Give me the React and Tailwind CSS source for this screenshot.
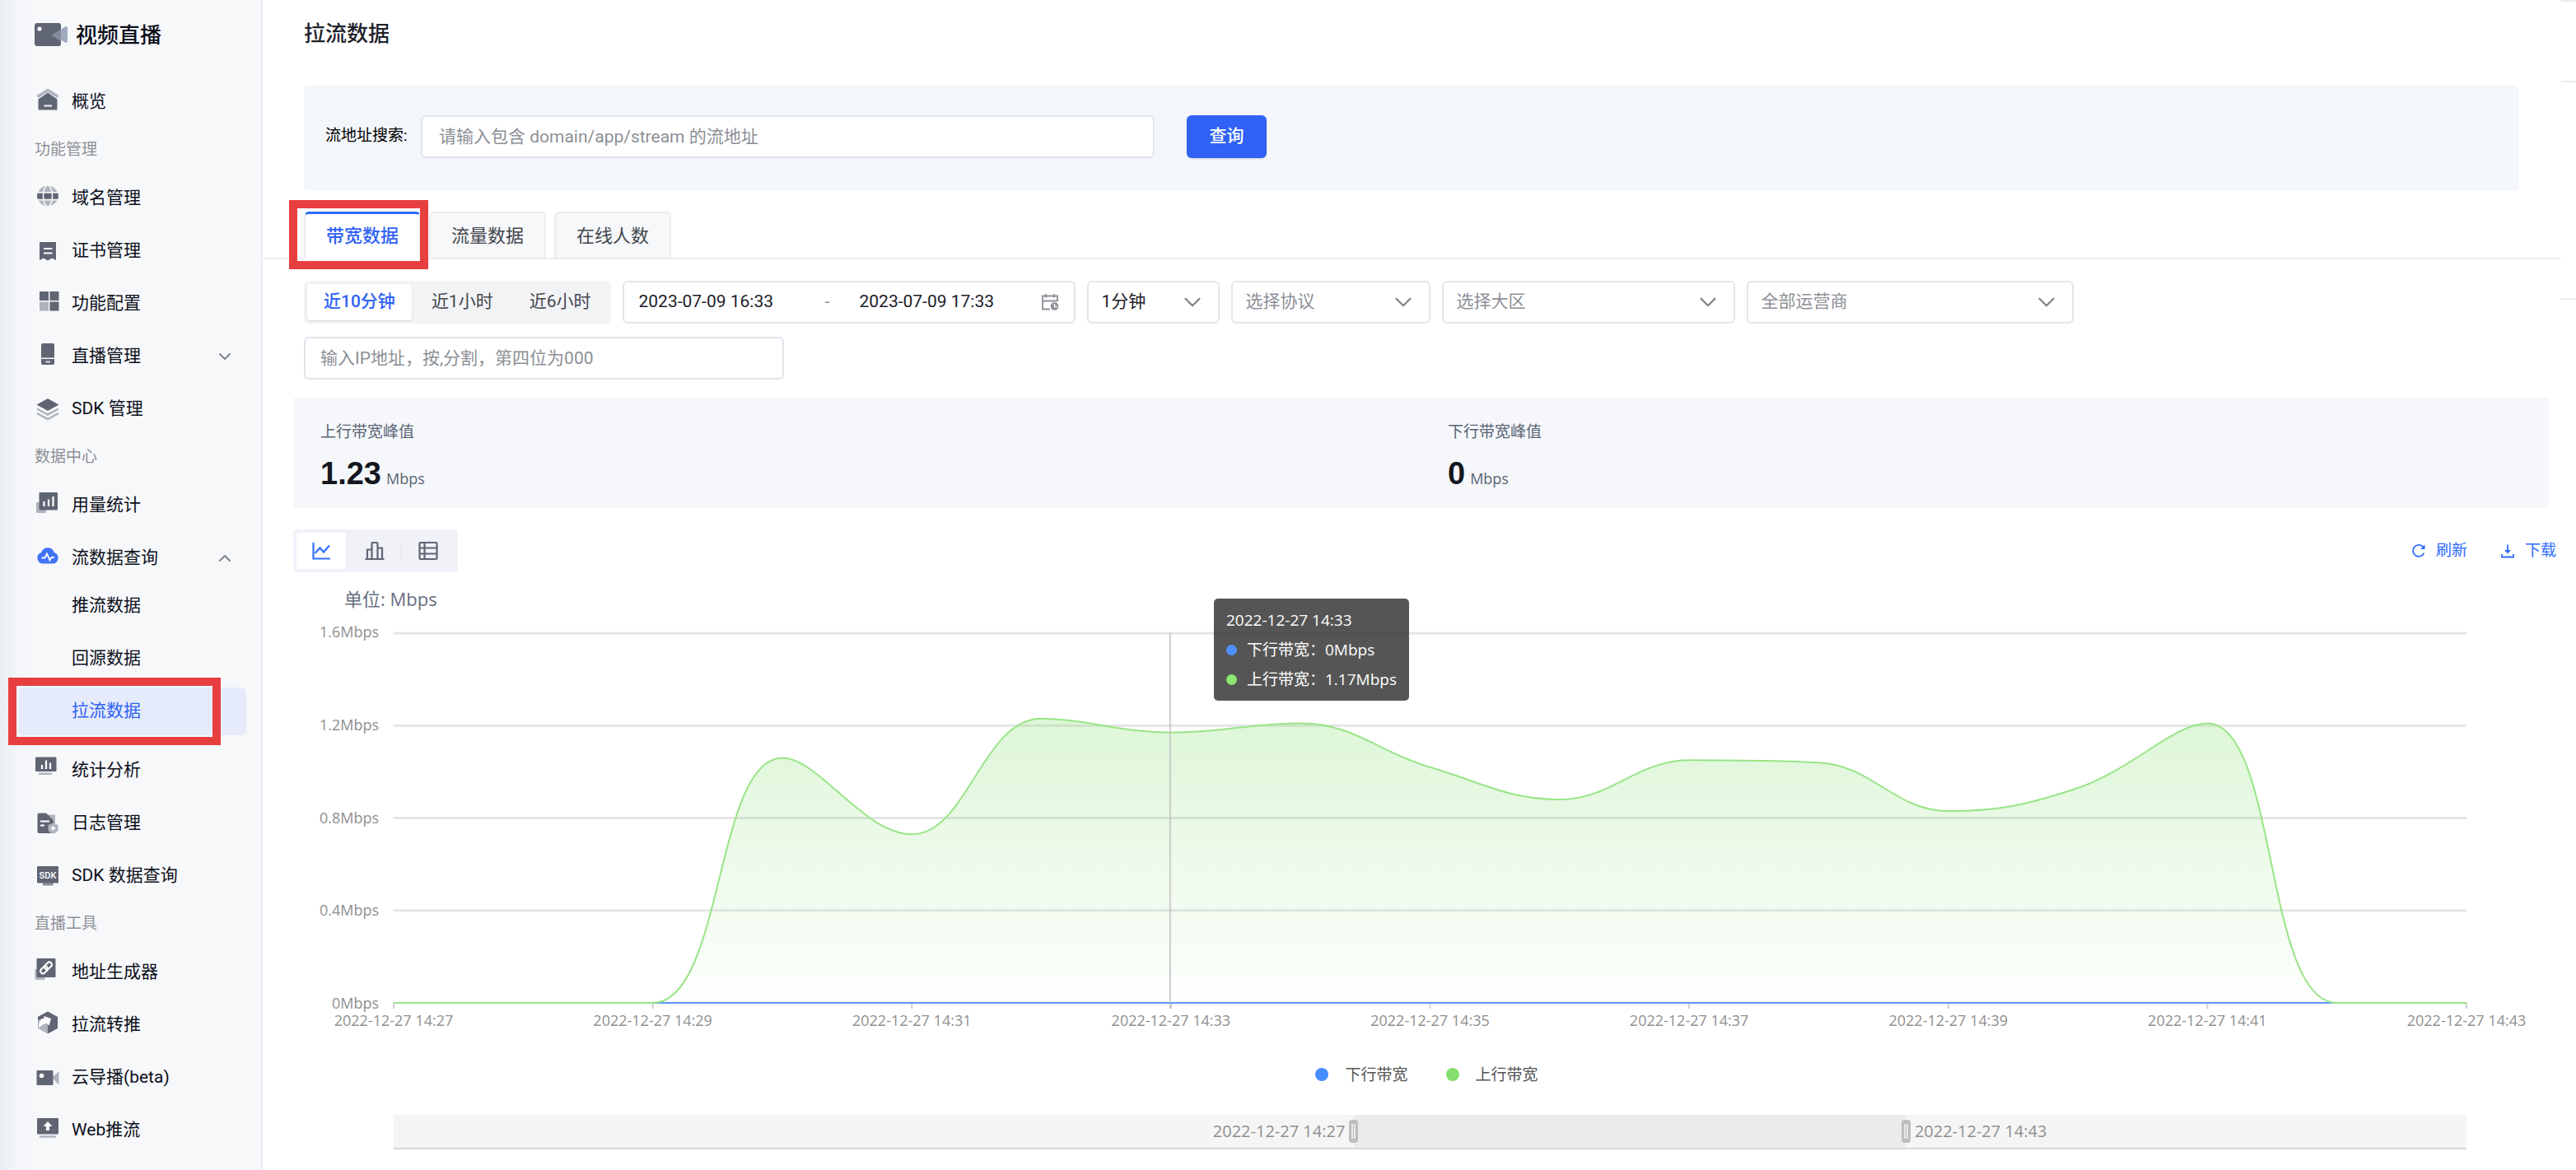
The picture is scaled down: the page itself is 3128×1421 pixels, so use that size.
import React, { useState } from 'react';
import clsx from 'clsx';
import { ChevronDown, ChevronUp } from 'lucide-react';

const DARK = '#5f6573';
const LIGHT = '#aeb3bd';

// --- Sidebar icons ---

const HomeIcon = () => (
  <svg viewBox="0 4 28 28" className="size-7 overflow-visible">
    <path d="M1.500 11.500 14 3.500l12.500 8" fill="none" stroke={LIGHT} strokeWidth="3.500" strokeLinejoin="round" />
    <path d="M14 6.500 25.500 14.500V26.500a1 1 0 0 1-1 1h-21a1 1 0 0 1-1-1V14.500Z" fill={DARK} />
    <path d="M9.500 22.500h9.500" stroke="#f7f8fa" strokeWidth="2" />
  </svg>
);

const GlobeIcon = () => (
  <svg viewBox="0 3 28 28" className="size-7 overflow-visible">
    <circle cx="14" cy="14" r="12.500" fill={LIGHT} />
    <path d="M1.500 10.500h25q.8 3.500 0 7.500h-25q-.8-4 0-7.500Z" fill={DARK} />
    <g fill="none" stroke="#f7f8fa" strokeWidth="1.600">
      <ellipse cx="14" cy="14" rx="5.500" ry="13" />
      <path d="M1 9.800h26M1 18.600h26" />
    </g>
  </svg>
);

const CertIcon = () => (
  <svg viewBox="0 0 28 28" className="size-7 overflow-visible">
    <path d="M4 3h20v22l-5-2.500-5 3-5-3L4 25Z" fill={DARK} />
    <path d="M9 11h10.500M9 16.500h10.500" stroke="#f7f8fa" strokeWidth="2" />
  </svg>
);

const GridIcon = () => (
  <svg viewBox="0 2 28 28" className="size-7 overflow-visible" fill={DARK}>
    <rect x="4" y="1" width="11" height="11" />
    <rect x="16.500" y="1" width="11" height="11" />
    <rect x="4" y="13.500" width="11" height="11" fill={LIGHT} />
    <rect x="16.500" y="13.500" width="11" height="11" />
  </svg>
);

const PhoneIcon = () => (
  <svg viewBox="0 3 28 28" className="size-7 overflow-visible">
    <path d="M8 1h12a2 2 0 0 1 2 2v15.500H6V3a2 2 0 0 1 2-2Z" fill={DARK} />
    <path d="M6 20h16v5a2 2 0 0 1-2 2H8a2 2 0 0 1-2-2Z" fill={DARK} />
    <path d="M11.500 23.500h5.500" stroke="#f7f8fa" strokeWidth="1.600" />
  </svg>
);

const LayersIcon = () => (
  <svg viewBox="0 0 28 28" className="size-7 overflow-visible">
    <path d="m14 1 13.500 7.500L14 16 .5 8.500Z" fill={DARK} />
    <path d="m1 13.500 13 7 13-7M1 19l13 7 13-7" fill="none" stroke={LIGHT} strokeWidth="2.500" />
  </svg>
);

const UsageIcon = () => (
  <svg viewBox="0 4 28 28" className="size-7 overflow-visible">
    <path d="M0 14h12v13H1.500A1.500 1.500 0 0 1 0 25.500Z" fill={LIGHT} />
    <rect x="3.500" y="2" width="22.500" height="21.500" rx="1" fill={DARK} />
    <path d="M9.500 19v-6M15 19V10.500M20.500 19V7" stroke="#fff" strokeWidth="2.200" />
  </svg>
);

const CloudIcon = () => (
  <svg viewBox="0 3 28 28" className="size-7 overflow-visible">
    <path d="M7 23.500a7 7 0 0 1-.8-13.500 8.200 8.200 0 0 1 15.600 0A7 7 0 0 1 21 23.500Z" fill="#4272f5" />
    <path d="M6.500 16.500h4l2.500-5 3.500 8 2-3.500h3.500" fill="none" stroke="#fff" strokeWidth="1.800" />
  </svg>
);

const AnalysisIcon = () => (
  <svg viewBox="0 4 28 28" className="size-7 overflow-visible">
    <rect x="-1" y="1.500" width="25.500" height="17.500" rx="1" fill={DARK} />
    <path d="M7 16v-5M12 16V5.500M17 16V8.500" stroke="#fff" strokeWidth="2.200" />
    <path d="M4 21.800h14" stroke={LIGHT} strokeWidth="2.500" strokeLinecap="round" />
  </svg>
);

const LogIcon = () => (
  <svg viewBox="0 0 28 28" className="size-7 overflow-visible">
    <path d="M14 3.500h9v15h-9Z" fill={LIGHT} />
    <path d="M3.500 1.500h8.500l9 9V26h-17.500a2 2 0 0 1-2-2V3.500a2 2 0 0 1 2-2Z" fill={DARK} />
    <path d="M5 11.500h11M5 16.500h5" stroke="#fff" strokeWidth="1.800" />
    <path d="M20.500 13.500 26.500 16v6q-1.500 3.500-6 4.500-4.500-1-6-4.500v-6Z" fill={LIGHT} />
    <path d="M20.500 17v5.500M17.800 19.800h5.500" stroke="#fff" strokeWidth="1.800" />
  </svg>
);

const SdkIcon = () => (
  <svg viewBox="0 0 28 28" className="size-7 overflow-visible">
    <rect x="8" y="20" width="12.500" height="5.500" fill="#8b909b" />
    <rect x="1" y="2" width="26" height="20.500" rx="1" fill={DARK} />
    <text x="14" y="16.500" textAnchor="middle" fontSize="11" fontWeight="500" fill="#fff" fontFamily="Roboto, sans-serif">SDK</text>
  </svg>
);

const LinkIcon = () => (
  <svg viewBox="0 4 28 28" className="size-7 overflow-visible">
    <path d="M-1.500 14h12v13H0A1.500 1.500 0 0 1-1.500 25.500Z" fill={LIGHT} />
    <rect x="0.500" y="1" width="23" height="23" rx="1" fill={DARK} />
    <g fill="none" stroke="#fff" strokeWidth="2" transform="rotate(-45 12 12.500)">
      <rect x="3.500" y="9.500" width="10" height="6" rx="3" />
      <rect x="10.500" y="9.500" width="10" height="6" rx="3" />
    </g>
  </svg>
);

const RelayIcon = () => (
  <svg viewBox="0 3 28 28" className="size-7 overflow-visible">
    <path d="M14 .5 2 7v14l12 6.500Z" fill={LIGHT} />
    <path d="M14 .5 26 7v14l-12 6.500Z" fill={DARK} />
    <path d="M14 .5 2 7v4l10-3.500 5 0Z" fill={DARK} />
    <path d="M3.500 21q-2-11 6.500-12.500L9 6l9 3-2.500 9-2-3Q6 15.500 3.500 21Z" fill="#fff" />
  </svg>
);

const CameraIcon = () => (
  <svg viewBox="0 0 28 28" className="size-7 overflow-visible">
    <path d="m19 14 8.500-8v16.500Z" fill={LIGHT} />
    <rect x="0.500" y="5" width="20" height="18" rx="1" fill={DARK} />
    <circle cx="6.500" cy="11.500" r="2.800" fill="#fff" />
  </svg>
);

const UploadIcon = () => (
  <svg viewBox="0 2 28 28" className="size-7 overflow-visible">
    <rect x="1" y="1" width="26" height="19.500" rx="1" fill={DARK} />
    <path d="m14 5 5.500 6H16v5h-4v-5H8.500Z" fill="#fff" />
    <path d="M5 23.500h18" stroke={LIGHT} strokeWidth="2.500" strokeLinecap="round" />
  </svg>
);

const LogoIcon = () => (
  <svg viewBox="0 0 40 28" className="h-7 w-10">
    <rect x="0" y="0" width="32" height="28" rx="3" fill={DARK} />
    <path d="M21.500 14.500 37 4.500q3-1.500 3 2v15q0 3.500-3 2L21.500 15.500Z" fill="#a0abbe" />
    <path d="M21.500 14.500 32 7.800v14.400L21.500 15.500Z" fill="#848b9a" />
    <circle cx="6" cy="7" r="2.600" fill="#fff" />
  </svg>
);

// --- Toolbar icons ---

const LineIcon = () => (
  <svg viewBox="0 0 24 24" className="size-6" fill="none" stroke="currentColor" strokeWidth="2.200">
    <path d="M2.500 2v19.500H23" />
    <path d="m4.500 15 6-6.500 4.500 5L22 5.500" />
  </svg>
);

const BarsIcon = () => (
  <svg viewBox="0 0 24 24" className="size-6" fill="none" stroke="currentColor" strokeWidth="2.200">
    <path d="M.5 22h23M3 22V10.500h5.500M15.500 8.500H21V22M8.500 22V3q0-1 1-1h5q1 0 1 1v19" />
  </svg>
);

const TableIcon = () => (
  <svg viewBox="0 0 24 24" className="size-6" fill="none" stroke="currentColor" strokeWidth="2.200">
    <rect x="1.500" y="2" width="21" height="20" rx="1" />
    <path d="M7.500 2v20M1.500 8.500h21M1.500 15.500h21" />
  </svg>
);

const RefreshIcon = () => (
  <svg viewBox="0 0 18 18" className="size-[18px]" fill="none" stroke="currentColor" strokeWidth="1.800">
    <path d="M14.500 4.500A7 7 0 1 0 15.500 11.500" />
    <path d="M16.500 1.500V7H11Z" fill="currentColor" stroke="none" />
  </svg>
);

const DownloadIcon = () => (
  <svg viewBox="0 0 18 18" className="size-[18px]" fill="none" stroke="currentColor" strokeWidth="1.800">
    <path d="M9 1.500v8M2 13v3.500h14V13" />
    <path d="M5 8h8l-4 4.500Z" fill="currentColor" stroke="none" />
  </svg>
);

const CalendarIcon = () => (
  <svg viewBox="0 0 22 22" className="size-[22px] text-[#8c8f96]" fill="none" stroke="currentColor" strokeWidth="1.800">
    <path d="M11 19.500H2V3.500h18V10M2 9.500h18M6 1v4.500M16 1v4.500" />
    <circle cx="16.500" cy="16" r="4.800" fill="currentColor" stroke="none" />
    <path d="M16.500 13v3.500h3" stroke="#fff" strokeWidth="1.400" />
  </svg>
);

// --- Data ---

const MENU = [
  { items: [{ name: '概览', Icon: HomeIcon }] },
  {
    title: '功能管理',
    items: [
      { name: '域名管理', Icon: GlobeIcon },
      { name: '证书管理', Icon: CertIcon },
      { name: '功能配置', Icon: GridIcon },
      { name: '直播管理', Icon: PhoneIcon, Arrow: ChevronDown },
      { name: 'SDK 管理', Icon: LayersIcon },
    ],
  },
  {
    title: '数据中心',
    items: [
      { name: '用量统计', Icon: UsageIcon },
      { name: '流数据查询', Icon: CloudIcon, Arrow: ChevronUp, children: ['推流数据', '回源数据', '拉流数据'] },
      { name: '统计分析', Icon: AnalysisIcon },
      { name: '日志管理', Icon: LogIcon },
      { name: 'SDK 数据查询', Icon: SdkIcon },
    ],
  },
  {
    title: '直播工具',
    items: [
      { name: '地址生成器', Icon: LinkIcon },
      { name: '拉流转推', Icon: RelayIcon },
      { name: '云导播(beta)', Icon: CameraIcon },
      { name: 'Web推流', Icon: UploadIcon },
    ],
  },
];

const TABS = ['带宽数据', '流量数据', '在线人数'];
const RANGES = ['近10分钟', '近1小时', '近6小时'];
const VIEWS = [
  { name: '折线图', Icon: LineIcon },
  { name: '柱状图', Icon: BarsIcon },
  { name: '表格', Icon: TableIcon },
];
const Y_LABELS = ['1.6Mbps', '1.2Mbps', '0.8Mbps', '0.4Mbps', '0Mbps'];
const X_LABELS = ['14:27', '14:29', '14:31', '14:33', '14:35', '14:37', '14:39', '14:41', '14:43'];

// one value per minute, 14:27 - 14:43
const UPSTREAM = [0, 0, 0, 1.06, 0.73, 1.23, 1.17, 1.21, 1.02, 0.88, 1.05, 1.04, 0.83, 0.93, 1.21, 0, 0];

// --- Chart ---

const W = 2517;
const H = 449;
const SMOOTH = 0.4;
const clamp = (v, a, b) => Math.max(Math.min(a, b), Math.min(Math.max(a, b), v));

// smooth line whose control points stay inside the box of each segment
const smoothPath = (pts) => {
  const out = pts.map(([x, y]) => [x, y]);
  const inn = pts.map(([x, y]) => [x, y]);
  for (let i = 1; i < pts.length - 1; i++) {
    const [p, c, n] = [pts[i - 1], pts[i], pts[i + 1]];
    const lp = Math.hypot(c[0] - p[0], c[1] - p[1]);
    const ln = Math.hypot(n[0] - c[0], n[1] - c[1]);
    const ratio = ln / (ln + lp);
    for (const k of [0, 1]) {
      let next = clamp(c[k] + (n[k] - p[k]) * SMOOTH * ratio, c[k], n[k]);
      const prev = clamp(c[k] - ((next - c[k]) * lp) / ln, p[k], c[k]);
      next = c[k] + ((c[k] - prev) * ln) / lp;
      inn[i][k] = prev;
      out[i][k] = next;
    }
  }
  let d = `M${pts[0].join(' ')}`;
  for (let i = 1; i < pts.length; i++) {
    d += `C${out[i - 1].join(' ')} ${inn[i].join(' ')} ${pts[i].join(' ')}`;
  }
  return d;
};

const linePath = smoothPath(UPSTREAM.map((v, i) => [(i * W) / 16, H - (v / 1.6) * H]));

const Chart = () => (
  <svg viewBox={`0 0 ${W} ${H}`} preserveAspectRatio="none" className="block h-[449px] w-full overflow-visible" role="img" aria-label="带宽数据">
    <defs>
      <linearGradient id="area" x1="0" y1="0" x2="0" y2="1">
        <stop offset="0" stopColor="#87df72" stopOpacity="0.28" />
        <stop offset="1" stopColor="#87df72" stopOpacity="0.01" />
      </linearGradient>
    </defs>
    <g stroke="#e4e5e7" strokeWidth="3">
      {[0, 1, 2, 3].map(i => <path key={i} d={`M0 ${(i * H) / 4}H${W}`} />)}
    </g>
    <g stroke="#cfd0d2" strokeWidth="2">
      {X_LABELS.map((t, i) => <path key={t} d={`M${(i * W) / 8} ${H}v7`} />)}
    </g>
    <path d={`${linePath}V${H}H0Z`} fill="url(#area)" />
    <path d={`M0 ${H}H${W}`} stroke="#5b95ff" strokeWidth="2" />
    <path d={linePath} fill="none" stroke="#98e586" strokeWidth="2" />
    <path d={`M${(W * 6) / 16 - 1} 0V${H + 7}`} stroke="#bbb" strokeOpacity="0.7" strokeWidth="2" />
  </svg>
);

const Dot = ({ className }) => <span className={clsx('inline-block rounded-full', className)} />;

const Handle = () => (
  <button type="button" aria-label="拖动" className="z-10 -mx-[5px] flex h-7 w-[11px] shrink-0 justify-center gap-px rounded-sm border-x-2 border-y border-[#bdbdbd] bg-[#bdbdbd] py-1">
    <span className="w-0.5 bg-[#e9e9e9]" />
    <span className="w-0.5 bg-[#e9e9e9]" />
  </button>
);

const Select = ({ label, placeholder, dark, className }) => (
  <div className={clsx('relative', className)}>
    <select
      aria-label={label}
      className={clsx('h-[52px] w-full appearance-none rounded-md border-2 border-[#e2e5ec] bg-white px-4 text-[21px]', dark ? 'text-[#1d2129]' : 'text-[#8c8f96]')}
    >
      <option>{placeholder}</option>
    </select>
    <ChevronDown className="pointer-events-none absolute top-[9px] right-4 size-[34px] text-[#7f838b]" strokeWidth={1.6} />
  </div>
);

// --- Layout ---

const Sidebar = () => (
  <aside className="w-[319px] shrink-0 border-r-2 border-[#e9eaef] bg-[#f7f8fa]">
    <div className="min-h-full bg-[linear-gradient(to_right,#e9edf1,#f3f5f8_20px,transparent_44px)] pt-[26px] pb-5">
      <div className="flex h-8 items-center gap-2.5 pl-[42px]">
        <LogoIcon />
        <span className="pt-0.5 text-[26px] font-medium text-[#0c0f1a]">视频直播</span>
      </div>
      <nav className="mt-[37px]">
        {MENU.map((group, i) => (
          <div key={i}>
            {group.title && <h3 className="flex h-[59px] items-center pl-[42px] text-[19px] text-[#8c8f96]">{group.title}</h3>}
            <ul className="flex flex-col gap-1.5">
              {group.items.map(({ name, Icon, Arrow, children }) => (
                <li key={name} className={clsx(children && 'mb-2')}>
                  <a href="#" className="flex h-[58px] items-center pr-8 pl-11 text-[21px] text-[#0c0f1a]">
                    <Icon />
                    <span className="ml-[15px] flex-1">{name}</span>
                    {Arrow && <Arrow className="size-6 text-[#7f838b]" strokeWidth={2} />}
                  </a>
                  {children && (
                    <ul className="mr-[18px] ml-[23px] flex flex-col gap-1.5">
                      {children.map(child => {
                        const current = child === '拉流数据';
                        return (
                          <li key={child} className="relative">
                            <a
                              href="#"
                              className={clsx('flex h-[58px] items-center rounded-md pl-16 text-[21px]', current ? 'bg-[#e5ebfa] text-[#2f62f5]' : 'text-[#0c0f1a]')}
                            >
                              {child}
                            </a>
                            {current && <span className="absolute -inset-y-3 right-[31px] -left-[13px] border-10 border-[#e73f3f]" />}
                          </li>
                        );
                      })}
                    </ul>
                  )}
                </li>
              ))}
            </ul>
          </div>
        ))}
      </nav>
    </div>
  </aside>
);

const Stat = ({ label, value }) => (
  <div className="flex-1 px-8">
    <p className="text-[19px] leading-7 text-[#5a6475]">{label}</p>
    <p className="mt-2.5 flex items-baseline gap-1.5 leading-[52px]">
      <span className="font-['Liberation_Sans'] text-[38px] font-bold text-[#14171f]">{value}</span>
      <span className="font-['Open_Sans'] text-[18px] text-[#5a6475]">Mbps</span>
    </p>
  </div>
);

const App = () => {
  const [tab, setTab] = useState(0);
  const [range, setRange] = useState(0);
  const [view, setView] = useState(0);

  return (
    <div className="flex min-h-screen bg-white font-[Roboto,'Noto_Sans_CJK_SC',sans-serif] text-[#1d2129]">
      <Sidebar />

      <main className="min-w-0 flex-1">
        <h1 className="pt-[21px] pl-[50px] text-[26px] leading-10 font-medium">拉流数据</h1>

        {/* Search */}
        <form className="mt-[43px] mr-[52px] ml-[50px] flex h-[127px] items-center rounded-sm bg-[#f3f6fa] pb-1 pl-[26px]" onSubmit={e => e.preventDefault()}>
          <label htmlFor="stream" className="w-[116px] text-[19px] text-black">流地址搜索:</label>
          <input
            id="stream"
            type="text"
            placeholder="请输入包含 domain/app/stream 的流地址"
            className="h-[52px] w-[891px] rounded-md border-2 border-[#e2e5ec] bg-white px-5 text-[21px] placeholder:text-[#8c8f96]"
          />
          <button type="submit" className="ml-[39px] h-[52px] w-[97px] rounded-md bg-[#2f62f5] text-[21px] font-medium text-white shadow-sm">查询</button>
        </form>

        {/* Tabs */}
        <div className="mt-[26px] flex gap-2.5 border-b-2 border-[#ebecf0] pl-[50px]" role="tablist">
          {TABS.map((name, i) => (
            <div key={name} className="relative -mb-0.5">
              <button
                type="button"
                role="tab"
                aria-selected={tab === i}
                onClick={() => setTab(i)}
                className={clsx(
                  'h-[58px] w-[142px] rounded-t-md border-2 text-[22px]',
                  tab === i ? 'border-x-[#ebecf0] border-t-[3px] border-t-[#2f6bf8] border-b-white bg-white font-medium text-[#2f62f5]' : 'border-[#ebecf0] bg-[#f7f8fa] text-[#42464e]'
                )}
              >
                {name}
              </button>
              {i === 0 && <span className="pointer-events-none absolute -top-3.5 -right-[9px] -bottom-3 -left-[18px] border-10 border-[#e73f3f]" />}
            </div>
          ))}
        </div>

        {/* Filters */}
        <div className="mt-[26px] flex flex-wrap gap-x-3.5 gap-y-4 pl-[50px]">
          <div className="flex h-[52px] gap-1 rounded-md bg-[#f2f3f5] p-1">
            {RANGES.map((name, i) => (
              <button
                key={name}
                type="button"
                onClick={() => setRange(i)}
                className={clsx('rounded px-5 text-[21px]', range === i ? 'bg-white font-medium text-[#2f62f5] shadow-sm' : 'text-[#42464e]')}
              >
                {name}
              </button>
            ))}
          </div>
          <div className="flex h-[52px] w-[550px] items-center rounded-md border-2 border-[#e2e5ec] px-[18px] text-[21px]">
            <input aria-label="开始时间" defaultValue="2023-07-09 16:33" className="w-[200px]" />
            <span className="w-[68px] pl-[26px] text-[#8c8f96]">-</span>
            <input aria-label="结束时间" defaultValue="2023-07-09 17:33" className="w-[200px] flex-1" />
            <CalendarIcon />
          </div>
          <Select label="粒度" placeholder="1分钟" dark className="w-[161px]" />
          <Select label="协议" placeholder="选择协议" className="w-[242px]" />
          <Select label="大区" placeholder="选择大区" className="w-[356px]" />
          <Select label="运营商" placeholder="全部运营商" className="w-[397px]" />
          <div className="w-full">
            <input
              type="text"
              aria-label="IP地址"
              placeholder="输入IP地址，按,分割，第四位为000"
              className="h-[52px] w-[583px] rounded-md border-2 border-[#e2e5ec] px-[18px] text-[21px] placeholder:text-[#8c8f96]"
            />
          </div>
        </div>

        {/* Peak values */}
        <div className="mt-[22px] mr-[15px] ml-[38px] flex h-[134px] bg-[#f5f7fa] pt-7">
          <Stat label="上行带宽峰值" value="1.23" />
          <Stat label="下行带宽峰值" value="0" />
        </div>

        {/* Chart toolbar */}
        <div className="mt-[26px] mr-1.5 ml-[37px] flex h-[52px] items-center justify-between">
          <div className="flex h-[52px] items-center rounded-sm bg-[#f1f2f8] py-1 pr-1.5 pl-1">
            {VIEWS.map(({ name, Icon }, i) => (
              <React.Fragment key={name}>
                {i > 0 && <span className={clsx('mx-0.5 h-5 w-px', i === 2 && 'bg-[#e0e2ea]')} />}
                <button
                  type="button"
                  aria-label={name}
                  onClick={() => setView(i)}
                  className={clsx('flex h-11 w-[60px] items-center justify-center rounded-sm', view === i ? 'bg-white text-[#3070ff]' : 'text-[#5d6676]')}
                >
                  <Icon />
                </button>
              </React.Fragment>
            ))}
          </div>
          <div className="flex gap-10 text-[19px] text-[#2f6bff]">
            <button type="button" className="flex items-center gap-3"><RefreshIcon />刷新</button>
            <button type="button" className="flex items-center gap-3"><DownloadIcon />下载</button>
          </div>
        </div>

        {/* Chart */}
        <div className="mt-4 mr-[115px] ml-[159px] font-['Open_Sans','Noto_Sans_CJK_SC',sans-serif] text-[18px] text-[#8f8f8f]">
          <p className="-ml-[60px] h-[58px] text-[22px] leading-8 text-[#667080]">单位: Mbps</p>
          <div className="relative">
            <ul className="absolute right-full -top-3.5 -bottom-3 mr-[18px] flex flex-col justify-between text-right leading-6">
              {Y_LABELS.map(t => <li key={t}>{t}</li>)}
            </ul>
            <Chart />
            <div className="absolute -top-[42px] left-[996px] flex h-[124px] w-[237px] flex-col justify-center rounded-[5px] bg-[#323232]/83 pl-[15px] text-[19px] leading-9 text-white">
              <p>2022-12-27 14:33</p>
              <p className="flex items-center"><Dot className="mr-3 size-[13px] bg-[#5090ff]" />下行带宽：0Mbps</p>
              <p className="flex items-center"><Dot className="mr-3 size-[13px] bg-[#8be873]" />上行带宽：1.17Mbps</p>
            </div>
          </div>
          <ul className="-mx-20 mt-[7px] flex justify-between leading-7">
            {X_LABELS.map(t => <li key={t} className="w-40 text-center">2022-12-27 {t}</li>)}
          </ul>

          {/* Legend */}
          <div className="mt-9 mr-2 flex h-8 items-center justify-center text-[19px] text-[#555]">
            <Dot className="mr-5 size-4 bg-[#468cff]" />下行带宽
            <Dot className="mr-5 ml-[46px] size-4 bg-[#84dd6c]" />上行带宽
          </div>

          {/* Zoom slider */}
          <div className="mt-[33px] flex h-[42px] items-center border-b-2 border-[#d8d8d8] bg-[#f5f5f5] text-[20px]">
            <span className="w-[46.3%] pr-2.5 text-right leading-9">2022-12-27 14:27</span>
            <Handle />
            <span className="h-full w-[26.6%] bg-[#ebebeb]" />
            <Handle />
            <span className="pl-2.5 leading-9">2022-12-27 14:43</span>
          </div>
        </div>
      </main>

      <div className="w-[18px] shrink-0 border-t-2 border-[#ecebf3]">
        <div className="h-[98px] border-b-2 border-[#ecebf3]" />
        <div className="h-[264px] border-b-2 border-[#ecebf3]" />
      </div>
    </div>
  );
};

export default App;
